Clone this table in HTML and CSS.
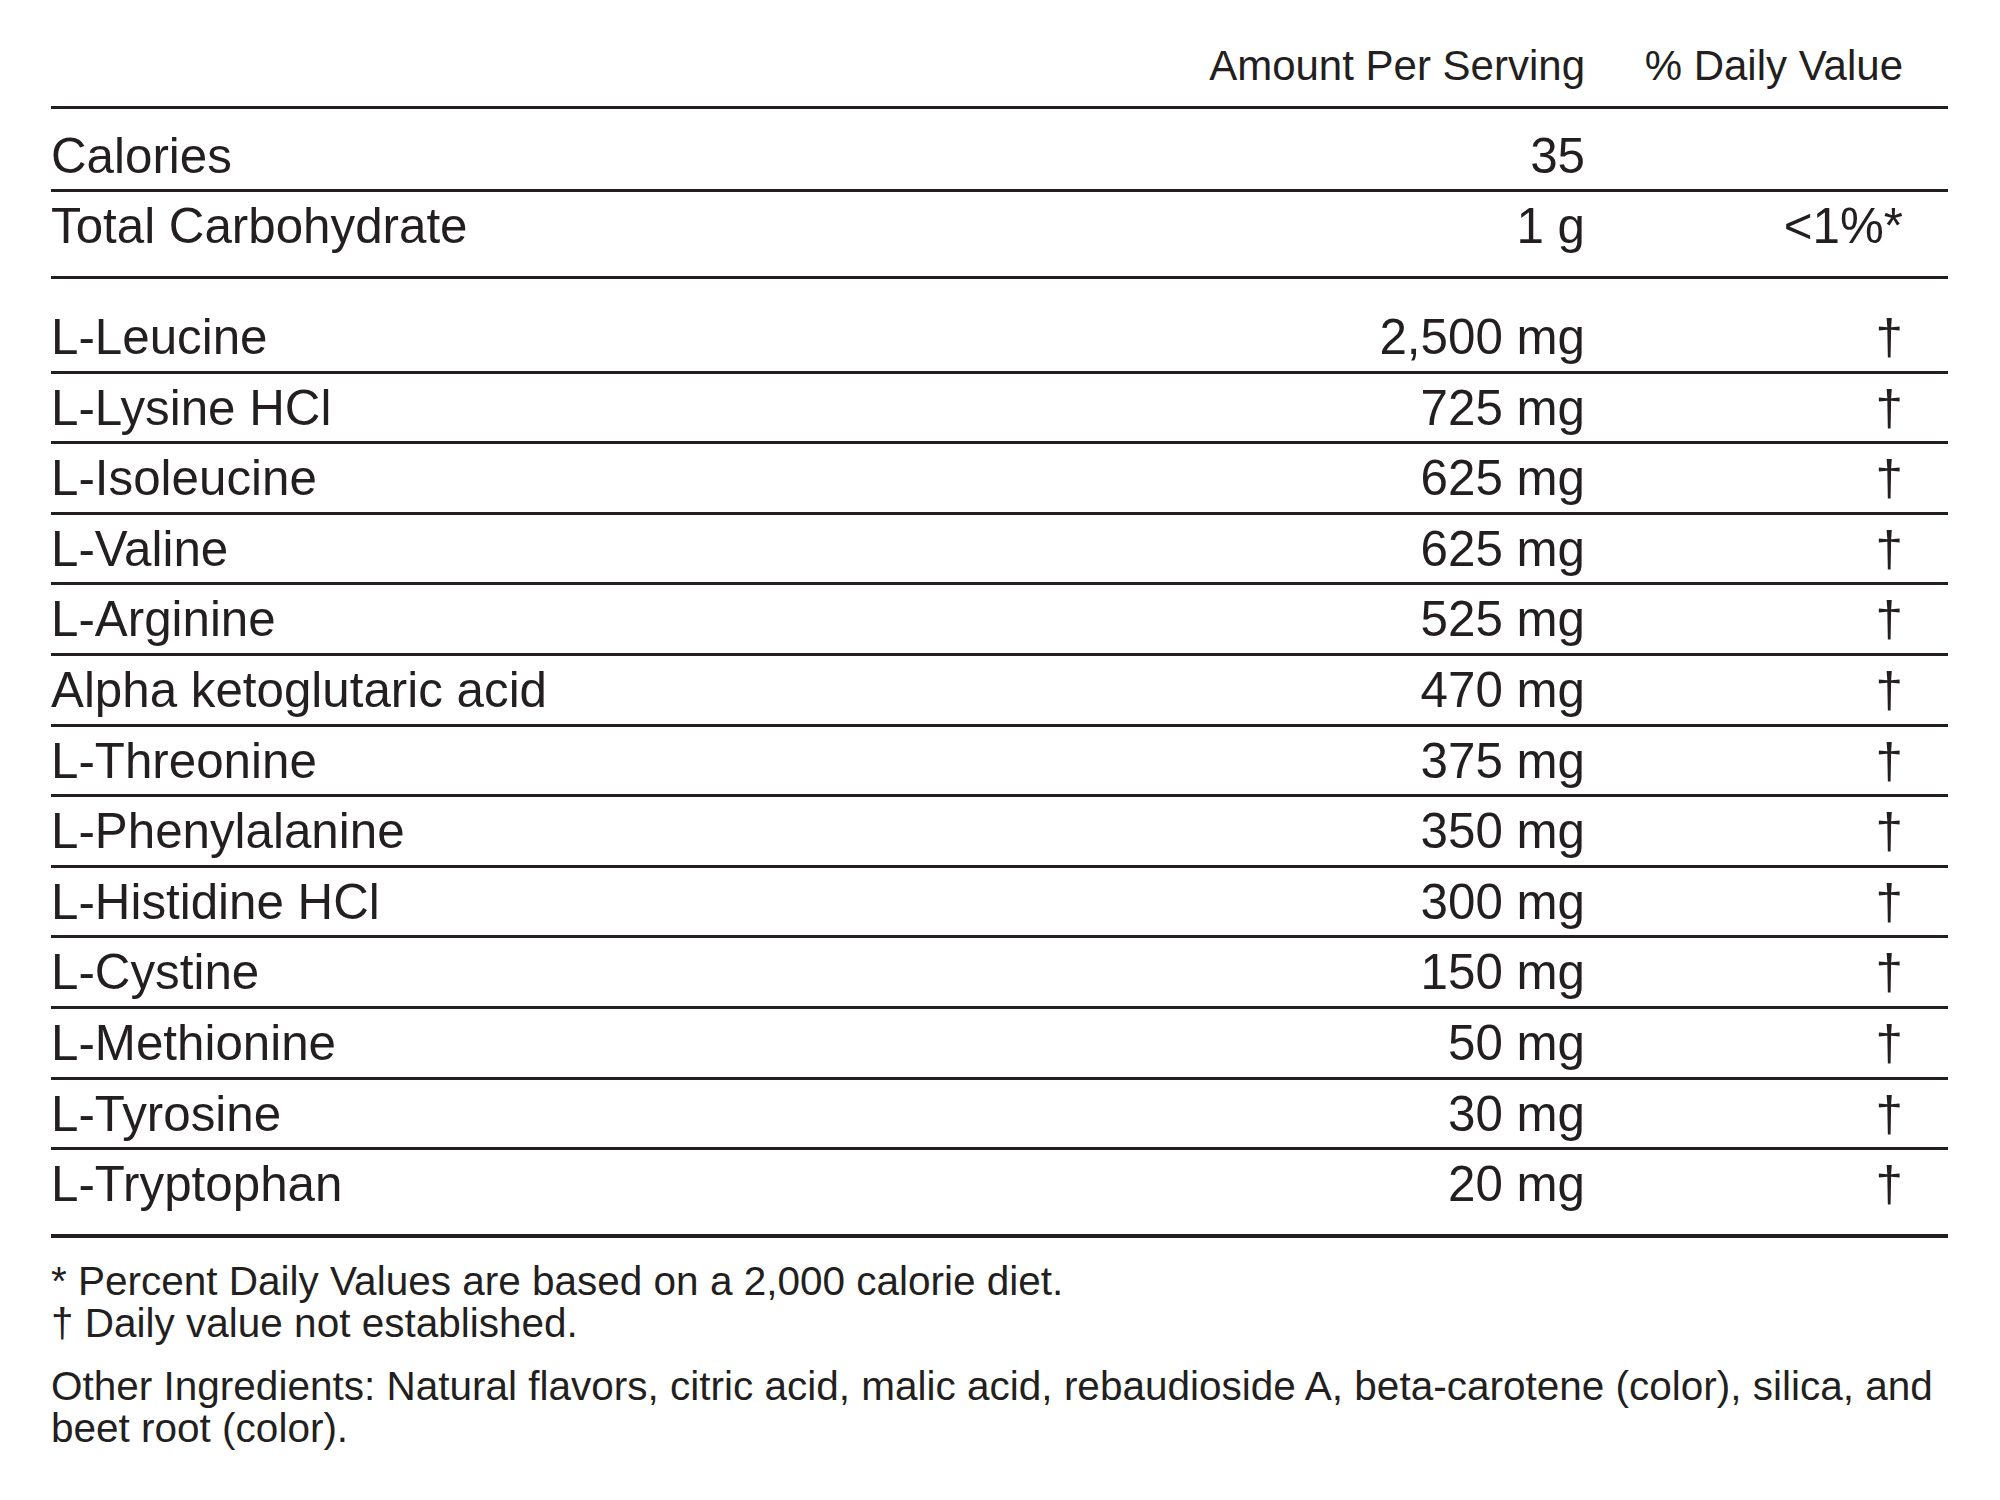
FILE: index.html
```html
<!DOCTYPE html>
<html lang="en">
<head>
<meta charset="utf-8">
<title>Supplement Facts</title>
<link rel="stylesheet" href="styles.css">
</head>
<body>
<div class="facts">
  <div class="row head">
    <span></span>
    <span class="amt">Amount Per Serving</span>
    <span class="dv">% Daily Value</span>
  </div>
  <div class="row cal">
    <span>Calories</span>
    <span class="amt">35</span>
    <span class="dv"></span>
  </div>
  <div class="row carb">
    <span>Total Carbohydrate</span>
    <span class="amt">1 g</span>
    <span class="dv">&lt;1%*</span>
  </div>
  <div class="aminos">
    <div class="row amino"><span>L-Leucine</span><span class="amt">2,500 mg</span><span class="dv">†</span></div>
    <div class="row amino"><span>L-Lysine HCl</span><span class="amt">725 mg</span><span class="dv">†</span></div>
    <div class="row amino"><span>L-Isoleucine</span><span class="amt">625 mg</span><span class="dv">†</span></div>
    <div class="row amino"><span>L-Valine</span><span class="amt">625 mg</span><span class="dv">†</span></div>
    <div class="row amino"><span>L-Arginine</span><span class="amt">525 mg</span><span class="dv">†</span></div>
    <div class="row amino"><span>Alpha ketoglutaric acid</span><span class="amt">470 mg</span><span class="dv">†</span></div>
    <div class="row amino"><span>L-Threonine</span><span class="amt">375 mg</span><span class="dv">†</span></div>
    <div class="row amino"><span>L-Phenylalanine</span><span class="amt">350 mg</span><span class="dv">†</span></div>
    <div class="row amino"><span>L-Histidine HCl</span><span class="amt">300 mg</span><span class="dv">†</span></div>
    <div class="row amino"><span>L-Cystine</span><span class="amt">150 mg</span><span class="dv">†</span></div>
    <div class="row amino"><span>L-Methionine</span><span class="amt">50 mg</span><span class="dv">†</span></div>
    <div class="row amino"><span>L-Tyrosine</span><span class="amt">30 mg</span><span class="dv">†</span></div>
    <div class="row amino"><span>L-Tryptophan</span><span class="amt">20 mg</span><span class="dv">†</span></div>
  </div>
  <div class="notes">
    <p>* Percent Daily Values are based on a 2,000 calorie diet.<br>† Daily value not established.</p>
    <p>Other Ingredients: Natural flavors, citric acid, malic acid, rebaudioside A, beta-carotene (color), silica, and beet root (color).</p>
  </div>
</div>
</body>
</html>
```
FILE: styles.css
```css
html, body {
  margin: 0;
  padding: 0;
  background: #ffffff;
}

body {
  font-family: "Liberation Sans", Arial, Helvetica, sans-serif;
  color: #231f20;
}

.facts {
  margin-left: 51px;
  width: 1897px;
}

.row {
  display: grid;
  grid-template-columns: 1fr 400px 318px;
  padding-right: 45px;
  font-size: 49.3px;
  line-height: 67px;
  border-bottom: 3px solid #231f20;
  white-space: nowrap;
}

.amt,
.dv {
  text-align: right;
}

.head {
  font-size: 42px;
  line-height: 46px;
  padding-top: 43px;
  padding-bottom: 17px;
}

.cal {
  padding-top: 13px;
}

.carb {
  padding-bottom: 17px;
}

.amino {
  line-height: 67.6px;
}

.amino:first-child {
  padding-top: 24px;
}

.amino:last-child {
  padding-bottom: 16px;
  border-bottom-width: 4px;
}

.notes {
  font-size: 40.5px;
  line-height: 42px;
  padding-top: 22px;
  margin-right: -20px;
}

.notes p {
  margin: 0 0 21px 0;
}
```
